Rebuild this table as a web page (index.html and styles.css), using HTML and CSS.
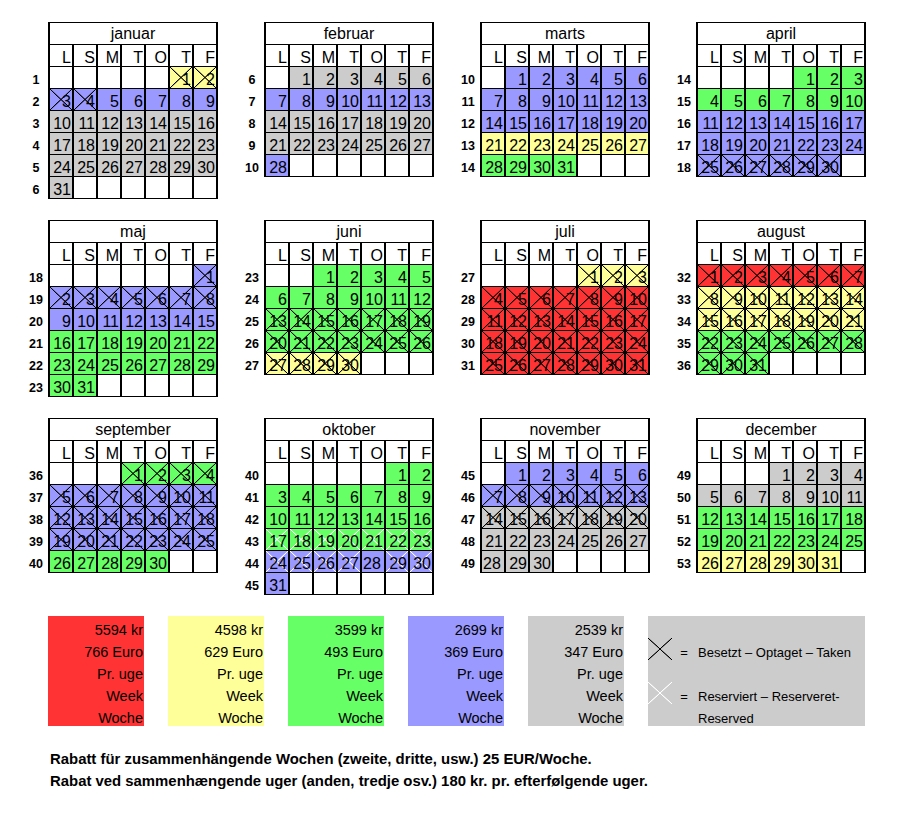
FILE: index.html
```html
<!DOCTYPE html>
<html lang="da">
<head>
<meta charset="utf-8">
<title>Kalender</title>
<link rel="stylesheet" href="styles.css">
</head>
<body>
<div class="page">

<div class="quarter">
  <div class="month">
    <div class="wk"><span>1</span><span>2</span><span>3</span><span>4</span><span>5</span><span>6</span></div>
    <div class="cal">
      <span class="t">januar</span>
      <span>L</span><span>S</span><span>M</span><span>T</span><span>O</span><span>T</span><span>F</span>
      <span></span><span></span><span></span><span></span><span></span><span class="y x">1</span><span class="y x">2</span>
      <span class="b x">3</span><span class="b x">4</span><span class="b">5</span><span class="b">6</span><span class="b">7</span><span class="b">8</span><span class="b">9</span>
      <span class="s">10</span><span class="s">11</span><span class="s">12</span><span class="s">13</span><span class="s">14</span><span class="s">15</span><span class="s">16</span>
      <span class="s">17</span><span class="s">18</span><span class="s">19</span><span class="s">20</span><span class="s">21</span><span class="s">22</span><span class="s">23</span>
      <span class="s">24</span><span class="s">25</span><span class="s">26</span><span class="s">27</span><span class="s">28</span><span class="s">29</span><span class="s">30</span>
      <span class="s">31</span><span></span><span></span><span></span><span></span><span></span><span></span>
    </div>
  </div>
  <div class="month">
    <div class="wk"><span>6</span><span>7</span><span>8</span><span>9</span><span>10</span></div>
    <div class="cal">
      <span class="t">februar</span>
      <span>L</span><span>S</span><span>M</span><span>T</span><span>O</span><span>T</span><span>F</span>
      <span></span><span class="s">1</span><span class="s">2</span><span class="s">3</span><span class="s">4</span><span class="s">5</span><span class="s">6</span>
      <span class="b">7</span><span class="b">8</span><span class="b">9</span><span class="b">10</span><span class="b">11</span><span class="b">12</span><span class="b">13</span>
      <span class="s">14</span><span class="s">15</span><span class="s">16</span><span class="s">17</span><span class="s">18</span><span class="s">19</span><span class="s">20</span>
      <span class="s">21</span><span class="s">22</span><span class="s">23</span><span class="s">24</span><span class="s">25</span><span class="s">26</span><span class="s">27</span>
      <span class="b">28</span><span></span><span></span><span></span><span></span><span></span><span></span>
    </div>
  </div>
  <div class="month">
    <div class="wk"><span>10</span><span>11</span><span>12</span><span>13</span><span>14</span></div>
    <div class="cal">
      <span class="t">marts</span>
      <span>L</span><span>S</span><span>M</span><span>T</span><span>O</span><span>T</span><span>F</span>
      <span></span><span class="b">1</span><span class="b">2</span><span class="b">3</span><span class="b">4</span><span class="b">5</span><span class="b">6</span>
      <span class="b">7</span><span class="b">8</span><span class="b">9</span><span class="b">10</span><span class="b">11</span><span class="b">12</span><span class="b">13</span>
      <span class="b">14</span><span class="b">15</span><span class="b">16</span><span class="b">17</span><span class="b">18</span><span class="b">19</span><span class="b">20</span>
      <span class="y">21</span><span class="y">22</span><span class="y">23</span><span class="y">24</span><span class="y">25</span><span class="y">26</span><span class="y">27</span>
      <span class="g">28</span><span class="g">29</span><span class="g">30</span><span class="g">31</span><span></span><span></span><span></span>
    </div>
  </div>
  <div class="month">
    <div class="wk"><span>14</span><span>15</span><span>16</span><span>17</span><span>18</span></div>
    <div class="cal">
      <span class="t">april</span>
      <span>L</span><span>S</span><span>M</span><span>T</span><span>O</span><span>T</span><span>F</span>
      <span></span><span></span><span></span><span></span><span class="g">1</span><span class="g">2</span><span class="g">3</span>
      <span class="g">4</span><span class="g">5</span><span class="g">6</span><span class="g">7</span><span class="g">8</span><span class="g">9</span><span class="g">10</span>
      <span class="b">11</span><span class="b">12</span><span class="b">13</span><span class="b">14</span><span class="b">15</span><span class="b">16</span><span class="b">17</span>
      <span class="b">18</span><span class="b">19</span><span class="b">20</span><span class="b">21</span><span class="b">22</span><span class="b">23</span><span class="b">24</span>
      <span class="b x">25</span><span class="b x">26</span><span class="b x">27</span><span class="b x">28</span><span class="b x">29</span><span class="b x">30</span><span></span>
    </div>
  </div>
</div>

<div class="quarter">
  <div class="month">
    <div class="wk"><span>18</span><span>19</span><span>20</span><span>21</span><span>22</span><span>23</span></div>
    <div class="cal">
      <span class="t">maj</span>
      <span>L</span><span>S</span><span>M</span><span>T</span><span>O</span><span>T</span><span>F</span>
      <span></span><span></span><span></span><span></span><span></span><span></span><span class="b x">1</span>
      <span class="b x">2</span><span class="b x">3</span><span class="b x">4</span><span class="b x">5</span><span class="b x">6</span><span class="b x">7</span><span class="b x">8</span>
      <span class="b">9</span><span class="b">10</span><span class="b">11</span><span class="b">12</span><span class="b">13</span><span class="b">14</span><span class="b">15</span>
      <span class="g">16</span><span class="g">17</span><span class="g">18</span><span class="g">19</span><span class="g">20</span><span class="g">21</span><span class="g">22</span>
      <span class="g">23</span><span class="g">24</span><span class="g">25</span><span class="g">26</span><span class="g">27</span><span class="g">28</span><span class="g">29</span>
      <span class="g">30</span><span class="g">31</span><span></span><span></span><span></span><span></span><span></span>
    </div>
  </div>
  <div class="month">
    <div class="wk"><span>23</span><span>24</span><span>25</span><span>26</span><span>27</span></div>
    <div class="cal">
      <span class="t">juni</span>
      <span>L</span><span>S</span><span>M</span><span>T</span><span>O</span><span>T</span><span>F</span>
      <span></span><span></span><span class="g">1</span><span class="g">2</span><span class="g">3</span><span class="g">4</span><span class="g">5</span>
      <span class="g">6</span><span class="g">7</span><span class="g">8</span><span class="g">9</span><span class="g">10</span><span class="g">11</span><span class="g">12</span>
      <span class="g x">13</span><span class="g x">14</span><span class="g x">15</span><span class="g x">16</span><span class="g x">17</span><span class="g x">18</span><span class="g x">19</span>
      <span class="g x">20</span><span class="g x">21</span><span class="g x">22</span><span class="g x">23</span><span class="g x">24</span><span class="g x">25</span><span class="g x">26</span>
      <span class="y x">27</span><span class="y x">28</span><span class="y x">29</span><span class="y x">30</span><span></span><span></span><span></span>
    </div>
  </div>
  <div class="month">
    <div class="wk"><span>27</span><span>28</span><span>29</span><span>30</span><span>31</span></div>
    <div class="cal">
      <span class="t">juli</span>
      <span>L</span><span>S</span><span>M</span><span>T</span><span>O</span><span>T</span><span>F</span>
      <span></span><span></span><span></span><span></span><span class="y x">1</span><span class="y x">2</span><span class="y x">3</span>
      <span class="r x">4</span><span class="r x">5</span><span class="r x">6</span><span class="r x">7</span><span class="r x">8</span><span class="r x">9</span><span class="r x">10</span>
      <span class="r x">11</span><span class="r x">12</span><span class="r x">13</span><span class="r x">14</span><span class="r x">15</span><span class="r x">16</span><span class="r x">17</span>
      <span class="r x">18</span><span class="r x">19</span><span class="r x">20</span><span class="r x">21</span><span class="r x">22</span><span class="r x">23</span><span class="r x">24</span>
      <span class="r x">25</span><span class="r x">26</span><span class="r x">27</span><span class="r x">28</span><span class="r x">29</span><span class="r x">30</span><span class="r x">31</span>
    </div>
  </div>
  <div class="month">
    <div class="wk"><span>32</span><span>33</span><span>34</span><span>35</span><span>36</span></div>
    <div class="cal">
      <span class="t">august</span>
      <span>L</span><span>S</span><span>M</span><span>T</span><span>O</span><span>T</span><span>F</span>
      <span class="r x">1</span><span class="r x">2</span><span class="r x">3</span><span class="r x">4</span><span class="r x">5</span><span class="r x">6</span><span class="r x">7</span>
      <span class="y x">8</span><span class="y x">9</span><span class="y x">10</span><span class="y x">11</span><span class="y x">12</span><span class="y x">13</span><span class="y x">14</span>
      <span class="y x">15</span><span class="y x">16</span><span class="y x">17</span><span class="y x">18</span><span class="y x">19</span><span class="y x">20</span><span class="y x">21</span>
      <span class="g x">22</span><span class="g x">23</span><span class="g x">24</span><span class="g x">25</span><span class="g x">26</span><span class="g x">27</span><span class="g x">28</span>
      <span class="g x">29</span><span class="g x">30</span><span class="g x">31</span><span></span><span></span><span></span><span></span>
    </div>
  </div>
</div>

<div class="quarter">
  <div class="month">
    <div class="wk"><span>36</span><span>37</span><span>38</span><span>39</span><span>40</span></div>
    <div class="cal">
      <span class="t">september</span>
      <span>L</span><span>S</span><span>M</span><span>T</span><span>O</span><span>T</span><span>F</span>
      <span></span><span></span><span></span><span class="g x">1</span><span class="g x">2</span><span class="g x">3</span><span class="g x">4</span>
      <span class="b x">5</span><span class="b x">6</span><span class="b x">7</span><span class="b x">8</span><span class="b x">9</span><span class="b x">10</span><span class="b x">11</span>
      <span class="b x">12</span><span class="b x">13</span><span class="b x">14</span><span class="b x">15</span><span class="b x">16</span><span class="b x">17</span><span class="b x">18</span>
      <span class="b x">19</span><span class="b x">20</span><span class="b x">21</span><span class="b x">22</span><span class="b x">23</span><span class="b x">24</span><span class="b x">25</span>
      <span class="g">26</span><span class="g">27</span><span class="g">28</span><span class="g">29</span><span class="g">30</span><span></span><span></span>
    </div>
  </div>
  <div class="month">
    <div class="wk"><span>40</span><span>41</span><span>42</span><span>43</span><span>44</span><span>45</span></div>
    <div class="cal">
      <span class="t">oktober</span>
      <span>L</span><span>S</span><span>M</span><span>T</span><span>O</span><span>T</span><span>F</span>
      <span></span><span></span><span></span><span></span><span></span><span class="g">1</span><span class="g">2</span>
      <span class="g">3</span><span class="g">4</span><span class="g">5</span><span class="g">6</span><span class="g">7</span><span class="g">8</span><span class="g">9</span>
      <span class="g">10</span><span class="g">11</span><span class="g">12</span><span class="g">13</span><span class="g">14</span><span class="g">15</span><span class="g">16</span>
      <span class="g w">17</span><span class="g w">18</span><span class="g w">19</span><span class="g w">20</span><span class="g w">21</span><span class="g w">22</span><span class="g w">23</span>
      <span class="b w">24</span><span class="b w">25</span><span class="b w">26</span><span class="b w">27</span><span class="b l">28</span><span class="b w">29</span><span class="b w">30</span>
      <span class="b">31</span><span></span><span></span><span></span><span></span><span></span><span></span>
    </div>
  </div>
  <div class="month">
    <div class="wk"><span>45</span><span>46</span><span>47</span><span>48</span><span>49</span></div>
    <div class="cal">
      <span class="t">november</span>
      <span>L</span><span>S</span><span>M</span><span>T</span><span>O</span><span>T</span><span>F</span>
      <span></span><span class="b">1</span><span class="b">2</span><span class="b">3</span><span class="b">4</span><span class="b">5</span><span class="b">6</span>
      <span class="b x">7</span><span class="b x">8</span><span class="b x">9</span><span class="b x">10</span><span class="b x">11</span><span class="b x">12</span><span class="b x">13</span>
      <span class="s x">14</span><span class="s x">15</span><span class="s x">16</span><span class="s x">17</span><span class="s x">18</span><span class="s x">19</span><span class="s x">20</span>
      <span class="s">21</span><span class="s">22</span><span class="s">23</span><span class="s">24</span><span class="s">25</span><span class="s">26</span><span class="s">27</span>
      <span class="s l">28</span><span class="s">29</span><span class="s">30</span><span></span><span></span><span></span><span></span>
    </div>
  </div>
  <div class="month">
    <div class="wk"><span>49</span><span>50</span><span>51</span><span>52</span><span>53</span></div>
    <div class="cal">
      <span class="t">december</span>
      <span>L</span><span>S</span><span>M</span><span>T</span><span>O</span><span>T</span><span>F</span>
      <span></span><span></span><span></span><span class="s">1</span><span class="s">2</span><span class="s">3</span><span class="s">4</span>
      <span class="s">5</span><span class="s">6</span><span class="s">7</span><span class="s">8</span><span class="s">9</span><span class="s">10</span><span class="s">11</span>
      <span class="g">12</span><span class="g">13</span><span class="g">14</span><span class="g">15</span><span class="g">16</span><span class="g">17</span><span class="g">18</span>
      <span class="g">19</span><span class="g">20</span><span class="g">21</span><span class="g">22</span><span class="g">23</span><span class="g">24</span><span class="g">25</span>
      <span class="y">26</span><span class="y">27</span><span class="y">28</span><span class="y">29</span><span class="y">30</span><span class="y">31</span><span></span>
    </div>
  </div>
</div>

<div class="legend">
  <div class="price pr"><span>5594 kr</span><span>766 Euro</span><span>Pr. uge</span><span>Week</span><span>Woche</span></div>
  <div class="price py"><span>4598 kr</span><span>629 Euro</span><span>Pr. uge</span><span>Week</span><span>Woche</span></div>
  <div class="price pg"><span>3599 kr</span><span>493 Euro</span><span>Pr. uge</span><span>Week</span><span>Woche</span></div>
  <div class="price pb"><span>2699 kr</span><span>369 Euro</span><span>Pr. uge</span><span>Week</span><span>Woche</span></div>
  <div class="price ps"><span>2539 kr</span><span>347 Euro</span><span>Pr. uge</span><span>Week</span><span>Woche</span></div>
  <div class="key">
    <span></span><span></span><span></span>
    <span class="kx"></span><span class="eq">=</span><span class="kt">Besetzt – Optaget – Taken</span>
    <span></span><span></span><span></span>
    <span class="kw"></span><span class="eq">=</span><span class="kt">Reserviert – Reserveret-</span>
    <span></span><span></span><span class="kt">Reserved</span>
  </div>
</div>

<div class="notes">
  <p>Rabatt für zusammenhängende Wochen (zweite, dritte, usw.) 25 EUR/Woche.</p>
  <p>Rabat ved sammenhængende uger (anden, tredje osv.) 180 kr. pr. efterfølgende uger.</p>
</div>

</div>
</body>
</html>
```

FILE: styles.css
```css
* { box-sizing: border-box; }

body {
  margin: 0;
  background: #fff;
  color: #000;
  font-family: "Liberation Sans", Arial, sans-serif;
}

.page {
  width: 922px;
  padding-top: 22px;
}

.quarter {
  display: flex;
  align-items: flex-start;
  height: 198px;
}

.month {
  display: flex;
  flex: none;
  width: 216px;
}

.wk {
  flex: none;
  width: 48px;
  padding-left: 24px;
  padding-top: 45px;
  display: flex;
  flex-direction: column;
}

.wk span {
  height: 22px;
  display: flex;
  align-items: flex-end;
  justify-content: center;
  padding-bottom: 3px;
  font-size: 12.5px;
  line-height: 12px;
  font-weight: bold;
}

.cal {
  flex: none;
  width: 170px;
  display: grid;
  grid-template-columns: repeat(7, 22px);
  grid-auto-rows: 21px;
  column-gap: 2px;
  row-gap: 1px;
  padding: 1px 2px;
  background: #000;
}

.cal > span {
  background-color: #fff;
  display: flex;
  align-items: flex-end;
  justify-content: flex-end;
  padding-right: 1px;
  font-size: 16px;
  line-height: 16px;
  white-space: nowrap;
}

.cal > .t {
  grid-column: span 7;
  justify-content: center;
  align-items: center;
  line-height: 21px;
  padding: 0;
}

.cal > .l { justify-content: flex-start; padding-left: 1px; }

.cal > .r, .pr { background-color: #ff3333; }
.cal > .y, .py { background-color: #ffff99; }
.cal > .g, .pg { background-color: #66ff66; }
.cal > .b, .pb { background-color: #9999ff; }
.cal > .s, .ps { background-color: #cccccc; }

.cal > .x, .key .kx {
  background-image:
    linear-gradient(to top right, transparent calc(50% - 0.7px), #000 calc(50% - 0.2px), #000 calc(50% + 0.2px), transparent calc(50% + 0.7px)),
    linear-gradient(to bottom right, transparent calc(50% - 0.7px), #000 calc(50% - 0.2px), #000 calc(50% + 0.2px), transparent calc(50% + 0.7px));
}

.cal > .w, .key .kw {
  background-image:
    linear-gradient(to top right, transparent calc(50% - 0.7px), #fff calc(50% - 0.2px), #fff calc(50% + 0.2px), transparent calc(50% + 0.7px)),
    linear-gradient(to bottom right, transparent calc(50% - 0.7px), #fff calc(50% - 0.2px), #fff calc(50% + 0.2px), transparent calc(50% + 0.7px));
}

.legend {
  display: flex;
  gap: 24px;
  padding-left: 48px;
}

.price {
  flex: none;
  width: 96px;
  height: 110px;
  display: flex;
  flex-direction: column;
}

.price span {
  height: 22px;
  display: flex;
  align-items: flex-end;
  justify-content: flex-end;
  padding-right: 1px;
  padding-bottom: 0;
  font-size: 14.5px;
  line-height: 15px;
}

.key {
  flex: none;
  width: 217px;
  height: 110px;
  background: #cccccc;
  display: grid;
  grid-template-columns: 24px 24px 1fr;
  grid-template-rows: repeat(5, 22px);
  font-size: 13px;
  line-height: 13px;
}

.key span {
  display: flex;
  align-items: flex-end;
  padding-bottom: 1px;
  white-space: nowrap;
}

.key .eq { justify-content: center; }
.key .kt { padding-left: 2px; }
.key .kx, .key .kw { padding: 0; }

.notes {
  margin-top: 22px;
  padding-left: 50px;
}

.notes p {
  margin: 0;
  height: 22px;
  line-height: 22px;
  font-size: 14.9px;
  font-weight: bold;
  white-space: nowrap;
}
```
